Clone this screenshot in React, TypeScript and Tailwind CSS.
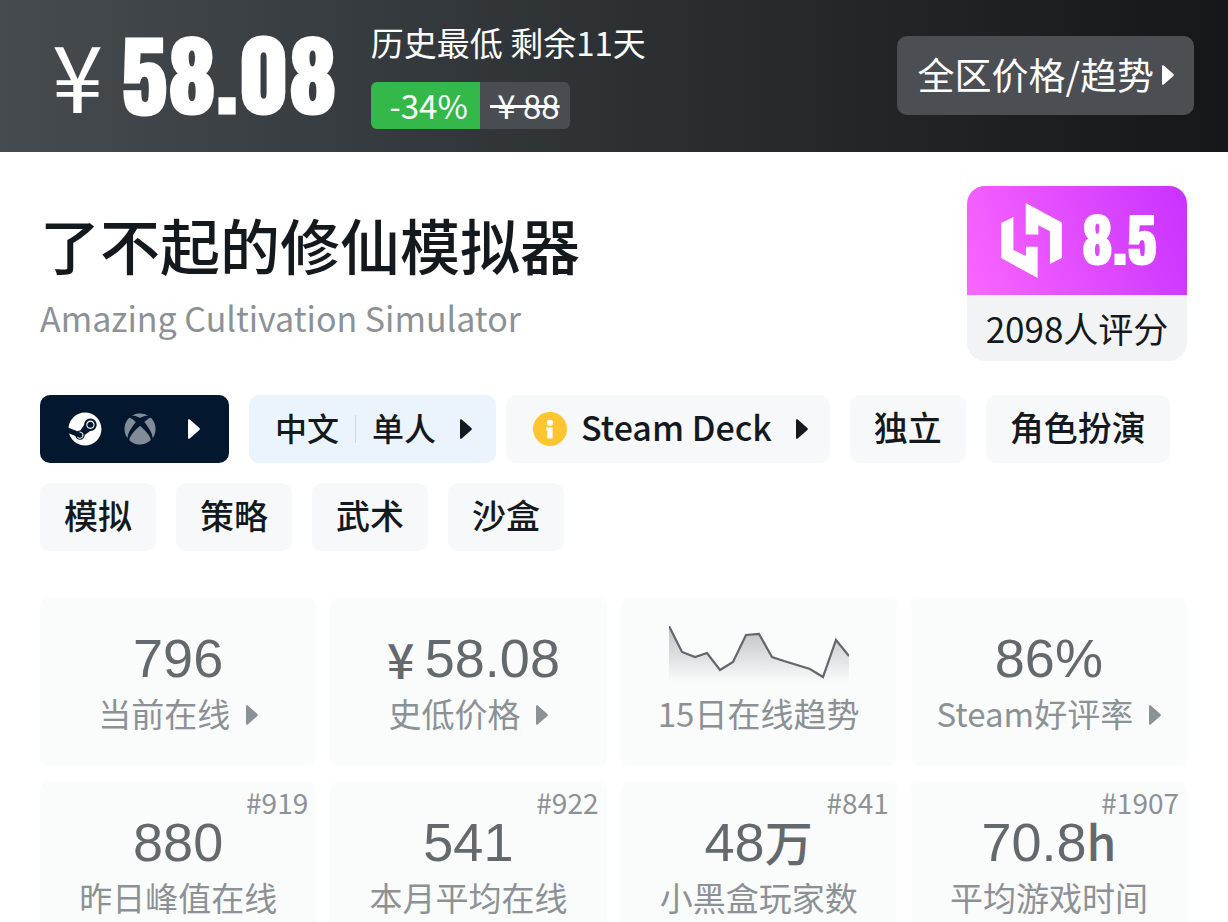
import type { ReactNode } from 'react'
import { FaSteam, FaXbox } from 'react-icons/fa'

type Stat = {
  label: string
  value?: string
  unit?: string
  currency?: boolean
  rank?: string
  linked?: boolean
}

const stats: Stat[] = [
  { label: '当前在线', value: '796', linked: true },
  { label: '史低价格', value: '58.08', currency: true, linked: true },
  { label: '15日在线趋势' },
  { label: 'Steam好评率', value: '86%', linked: true },
  { label: '昨日峰值在线', value: '880', rank: '#919' },
  { label: '本月平均在线', value: '541', rank: '#922' },
  { label: '小黑盒玩家数', value: '48', unit: '万', rank: '#841' },
  { label: '平均游戏时间', value: '70.8', unit: 'h', rank: '#1907' },
]

const genres = ['独立', '角色扮演', '模拟', '策略', '武术', '沙盒']

const trend = [
  [0, 0],
  [13, 26],
  [26, 31],
  [38, 27],
  [51, 44],
  [64, 36],
  [77, 9],
  [90, 8],
  [103, 31],
  [115, 35],
  [128, 39],
  [141, 43],
  [154, 51],
  [167, 14],
  [180, 30],
]

function Arrow({ className = '' }: { className?: string }) {
  return (
    <svg
      viewBox="0 0 12 20"
      className={`h-5 w-3 shrink-0 ${className}`}
      fill="currentColor"
      aria-hidden="true"
    >
      <path d="M0 1.2C0 0.2 1 -0.2 1.7 0.5L11.4 9.1C12 9.6 12 10.4 11.4 10.9L1.7 19.5C1 20.2 0 19.8 0 18.8Z" />
    </svg>
  )
}

function InfoIcon() {
  return (
    <svg viewBox="0 0 34 34" className="mt-1 size-[34px]" aria-hidden="true">
      <circle cx="17" cy="17" r="17" fill="#fdc530" />
      <circle cx="17" cy="10.8" r="3.1" fill="#fff" />
      <path d="M13.2 15.5H19.6V26.5H14.4V18.4H13.2Z" fill="#fff" />
    </svg>
  )
}

function Logo() {
  return (
    <svg
      viewBox="183 98 183 226"
      className="h-[75px] w-[61px]"
      fill="#fff"
      aria-hidden="true"
    >
      <path d="M183 158L220 140V240L258 258V230H293V324L183 264Z" />
      <path d="M257 98L366 157V264L330 282V183L295 165V193H257Z" />
    </svg>
  )
}

function TrendChart() {
  const points = trend.map(([x, y]) => `${x},${y}`).join(' ')

  return (
    <svg viewBox="0 0 180 60" className="-mt-1 h-[60px] w-[180px]" role="img" aria-label="15日在线趋势">
      <defs>
        <linearGradient id="trend-fill" x1="0" y1="0" x2="0" y2="1">
          <stop offset="0" stopColor="#63666b" stopOpacity="0.4" />
          <stop offset="1" stopColor="#63666b" stopOpacity="0" />
        </linearGradient>
      </defs>
      <polygon points={`0,56 ${points} 180,56`} fill="url(#trend-fill)" />
      <polyline points={points} fill="none" stroke="#63666b" strokeWidth="2.2" />
    </svg>
  )
}

function Tag({ children, className = 'bg-[#f7f8fa] px-6' }: { children: ReactNode; className?: string }) {
  return (
    <button
      type="button"
      className={`flex h-[68px] items-center rounded-[10px] pb-1 text-[34px] leading-10 font-medium ${className}`}
    >
      {children}
    </button>
  )
}

function StatCard({ stat }: { stat: Stat }) {
  return (
    <div className="relative flex h-[168px] flex-col items-center rounded-lg bg-[#fafbfb] pt-8">
      {stat.rank ? (
        <span className="absolute top-0 right-2 text-[28px] leading-10 text-[#8c9196]">
          {stat.rank}
        </span>
      ) : null}
      <div className="flex h-14 items-center font-['Liberation_Sans','Noto_Sans_CJK_SC',sans-serif] text-[54px] leading-14 text-[#64696e]">
        {stat.currency ? (
          <span className="w-12 text-center font-['Noto_Sans_CJK_SC',sans-serif] text-5xl leading-[52px] font-medium">
            ¥
          </span>
        ) : null}
        {stat.value ? <span>{stat.value}</span> : <TrendChart />}
        {stat.unit ? (
          <span className="pb-1 font-['Noto_Sans_CJK_SC',sans-serif] text-5xl leading-[52px] font-medium">
            {stat.unit}
          </span>
        ) : null}
      </div>
      <div className="mt-[7px] flex items-center gap-4 text-[33px] leading-10 whitespace-nowrap text-[#8c9196]">
        {stat.label}
        {stat.linked ? <Arrow className="mt-1" /> : null}
      </div>
    </div>
  )
}

export default function App() {
  return (
    <div className="h-screen overflow-hidden bg-white font-['Noto_Sans_CJK_SC',sans-serif] text-[#14191e]">
      <header className="flex h-[152px] items-center justify-between bg-linear-to-r from-[#464b4f] to-[#14181b] pr-[34px] pb-0.5 pl-[52px] text-white">
        <div className="flex items-center">
          <span className="pb-1 text-[92px] leading-none">¥</span>
          <span className="ml-[18px] pb-1.5 font-['Oswald','Roboto_Condensed',sans-serif] text-[92px] leading-none font-bold [-webkit-text-stroke:3px_white]">
            58.08
          </span>
          <div className="ml-[34px]">
            <p className="text-[33px] leading-10">历史最低 剩余11天</p>
            <div className="mt-5 flex h-[47px] w-fit text-[33px] leading-[46px]">
              <span className="w-[109px] rounded-l-md bg-[#34b84a] pr-3 text-right">-34%</span>
              <s className="w-[90px] rounded-r-md bg-[#494c51] text-center whitespace-pre"> ¥ 88</s>
            </div>
          </div>
        </div>
        <button
          type="button"
          className="flex h-[79px] items-center gap-2 rounded-[10px] bg-[#4b4e53] px-5 text-[37px]"
        >
          全区价格/趋势
          <Arrow />
        </button>
      </header>

      <main className="pr-[41px] pl-10">
        <section className="flex items-start justify-between pt-[34px]">
          <div className="pt-[22px]">
            <h1 className="text-[60px] leading-[72px] font-medium">了不起的修仙模拟器</h1>
            <p className="mt-[18px] text-[34px] leading-10 text-[#8c9196]">Amazing Cultivation Simulator</p>
          </div>
          <div className="w-[220px] overflow-hidden rounded-[18px] bg-[#f2f3f5]">
            <div className="flex h-[109px] items-center justify-center gap-5 bg-linear-[70deg] from-[#fa66ff] to-[#c832ff] pl-1 text-white">
              <Logo />
              <span className="pb-1.5 font-['Oswald','Roboto_Condensed',sans-serif] text-[59px] leading-none font-bold [-webkit-text-stroke:2px_white]">
                8.5
              </span>
            </div>
            <p className="text-center text-[35px] leading-[66px]">2098人评分</p>
          </div>
        </section>

        <section className="mt-[34px] flex flex-wrap gap-x-5 gap-y-5">
          <Tag className="bg-[#03182f] pr-[29px] pl-7 text-white">
            <FaSteam className="mt-1 size-[34px]" aria-label="Steam" />
            <FaXbox className="mt-1 ml-[22px] size-8 text-[#818c98]" aria-label="Xbox" />
            <Arrow className="mt-1 ml-8" />
          </Tag>
          <div className="flex gap-2.5">
            <Tag className="bg-[#ebf4fd] pr-6 pl-[26px]">
              <span className="text-[32px]">中文</span>
              <span className="mx-4 mt-1 h-7 w-px bg-[#cfd8e2]" />
              <span className="text-[32px]">单人</span>
              <Arrow className="mt-1 ml-6" />
            </Tag>
            <Tag className="bg-[#f7f8fa] pr-[22px] pl-[27px]">
              <InfoIcon />
              <span className="mr-6 ml-3.5">Steam Deck</span>
              <Arrow className="mt-1" />
            </Tag>
          </div>
          {genres.map((genre) => (
            <Tag key={genre}>{genre}</Tag>
          ))}
        </section>

        <section className="mt-[47px] grid grid-cols-4 gap-x-3.5 gap-y-4">
          {stats.map((stat) => (
            <StatCard key={stat.label} stat={stat} />
          ))}
        </section>
      </main>
    </div>
  )
}
